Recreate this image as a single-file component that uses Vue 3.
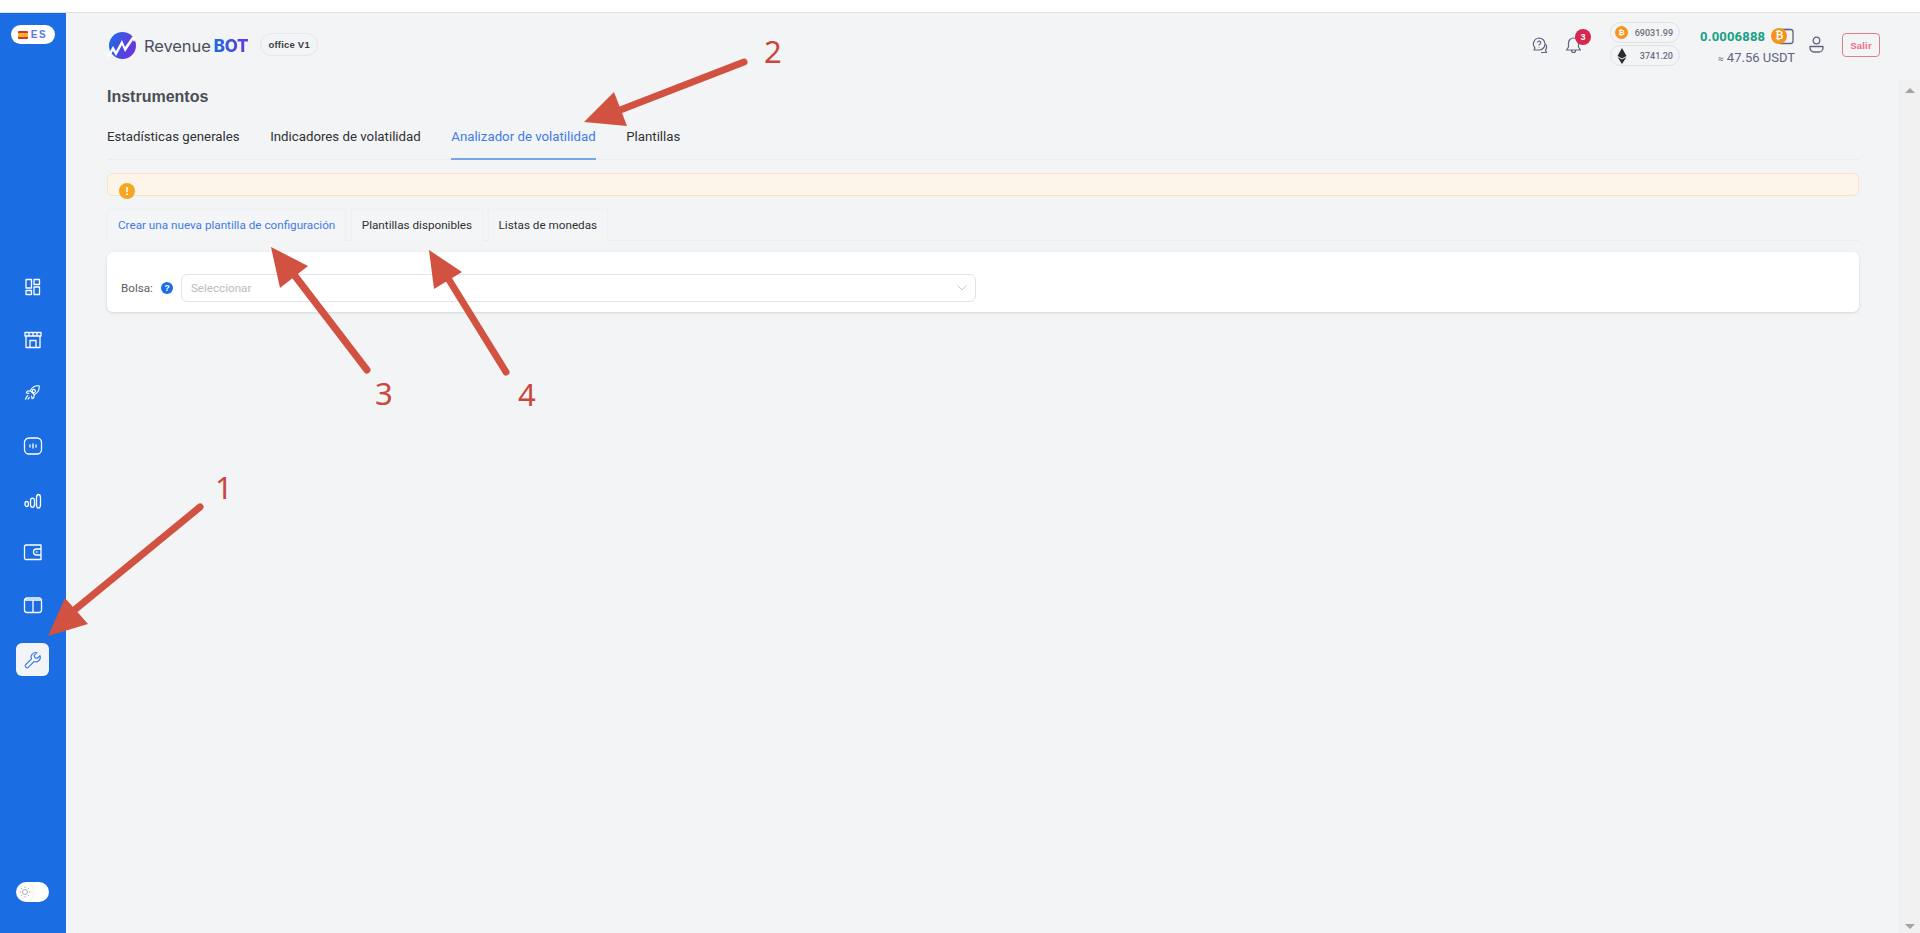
<script setup>
const navIcons = [
  { d: 'M6 5.500h5.500v8.500H6zM14 5.500h5.500v5H14zM6 16.500h5.500v4H6zM14 13h5.500v7.500H14z', s: 26 },
  { d: 'M5 5.500h16v3.500H5zM9 5.500V9M13 5.500V9M17 5.500V9M6 9v11.500h14V9M10 20.500v-7h6v7', s: 26 },
  { d: 'M20.500 5.500c-4.500-.5-8 1.500-10 5.500l4.500 4.500c4-2 6-5.500 5.500-10zM10.500 11l-3.500.5-1 2 3 .5M15 15.500l-.5 3.500-2 1-.5-3M7.500 16.500l-2.500 4M9.500 18.500l-1.500 2M14.500 9.500a1.800 1.800 0 1 0 .01 0', s: 23 },
  { d: 'M9 5h8a4.500 4.500 0 0 1 4.500 4.500v7A4.500 4.500 0 0 1 17 21H9a4.500 4.500 0 0 1-4.500-4.500v-7A4.500 4.500 0 0 1 9 5zM10 12v2M13 11v4M16 12v2', s: 26 },
  { d: 'M5 17.500a1.700 2 0 0 1 3.400 0v1a1.700 2 0 0 1-3.400 0zM10.500 15a2 2.800 0 0 1 4 0v3.500a2 2.800 0 0 1-4 0zM16.500 12a2 3.500 0 0 1 4 0v6.500a2 3.500 0 0 1-4 0z', s: 26 },
  { d: 'M6 6h15v14.500H6a1.500 1.500 0 0 1-1.500-1.500V7.500A1.500 1.500 0 0 1 6 6zM21 10h-4.500a3 3 0 0 0 0 6H21M16.500 13h.5', s: 26 },
  { d: 'M7 6h12a2.500 2.500 0 0 1 2.500 2.500v9.500a2.500 2.500 0 0 1-2.500 2.500H7A2.500 2.500 0 0 1 4.500 18V8.500A2.500 2.500 0 0 1 7 6zM13 8v12.500M5 8h16', s: 26 },
]
const mainTabs = ['Estadísticas generales', 'Indicadores de volatilidad', 'Analizador de volatilidad', 'Plantillas']
const subTabs = ['Crear una nueva plantilla de configuración', 'Plantillas disponibles', 'Listas de monedas']
</script>

<template>
  <div class="app">
    <div class="topband"></div>
    <div class="body">
      <aside class="side">
        <div class="lang">
          <span class="flag"></span><span class="lang-t">ES</span>
        </div>
        <nav class="nav">
          <div v-for="(p, i) in navIcons" :key="i" class="nav-item">
            <svg :width="p.s" :height="p.s" viewBox="0 0 26 26" fill="none" stroke="#fff" stroke-width="1.300" stroke-linejoin="round" stroke-linecap="round"><path :d="p.d" /></svg>
          </div>
          <div class="nav-active">
            <svg width="20" height="20" viewBox="0 0 20 20" fill="none" stroke="#3f80e8" stroke-width="1.200" stroke-linejoin="round" stroke-linecap="round"><path d="M12.500 2.500a4.500 4.500 0 0 0-4 6.300L2.800 14.500a1.900 1.900 0 0 0 2.700 2.700l5.700-5.700a4.500 4.500 0 0 0 5.800-5.800l-2.800 2.600-2.400-.6-.6-2.300 2.700-2.700a4.500 4.500 0 0 0-1.400-.2z" /></svg>
          </div>
        </nav>
        <div class="toggle">
          <span class="knob">
            <svg width="12" height="12" viewBox="0 0 12 12" fill="none" stroke="#a9adb3" stroke-width="1"><circle cx="6" cy="6" r="2.500" /><path d="M6 .5v1.500M6 10v1.500M.5 6H2M10 6h1.500M2.100 2.100l1 1M8.900 8.900l1 1M2.100 9.900l1-1M8.900 3.100l1-1" /></svg>
          </span>
        </div>
      </aside>

      <div class="main">
        <header class="head">
          <div class="logo">
            <svg width="30" height="29" viewBox="0 0 30 29">
              <defs><linearGradient id="lg" x1="0" y1="0" x2="1" y2="0.300"><stop offset="0" stop-color="#1a6de3" /><stop offset="1" stop-color="#6a35e0" /></linearGradient></defs>
              <circle cx="15.500" cy="14.500" r="13.500" fill="url(#lg)" />
              <path d="M0 26l6-11 3 5 6-11 3 7 7-10 5-1-3 6-1-2-8 12-3-7-6 11-3-5-4 6z" fill="#fff" />
            </svg>
            <span class="rev">Revenue</span><span class="bot">BOT</span>
          </div>
          <span class="office">office V1</span>

          <div class="head-right">
            <svg class="ic-help" width="17" height="17" viewBox="0 0 17 17" fill="none" stroke="#5f6480" stroke-width="1.200" stroke-linejoin="round"><path d="M7 1a6 6 0 0 1 0 12H2l1-2A6 6 0 0 1 7 1z" /><path d="M5.500 5.500a1.600 1.600 0 1 1 2.500 1.500c-.7.400-1 .8-1 1.500M7 10v.6" /><path d="M13.500 7a5 5 0 0 1 0 6l1 2.500H9" /></svg>
            <div class="bell">
              <svg width="17" height="18" viewBox="0 0 17 18" fill="none" stroke="#5f6480" stroke-width="1.200" stroke-linejoin="round"><path d="M8.500 2a5 5 0 0 1 5 5v4l2 3H1.500l2-3V7a5 5 0 0 1 5-5zM6.500 14.500a2 2 0 0 0 4 0" /></svg>
              <span class="badge">3</span>
            </div>
            <div class="coins">
              <div class="coin">
                <span class="btc-s">₿</span><span class="coin-v">69031.99</span>
              </div>
              <div class="coin">
                <svg width="14" height="16" viewBox="0 0 14 16"><path d="M7 0l4.500 8L7 10.500 2.500 8z" fill="#2b2b33" /><path d="M7 11.500l4.500-2.500L7 16 2.500 9z" fill="#2b2b33" /></svg>
                <span class="coin-v">3741.20</span>
              </div>
            </div>
            <div class="balance">
              <div class="bal-top">
                <span class="bal-g">0.0006888</span>
                <span class="wallet">
                  <svg width="17" height="17" viewBox="0 0 17 17" fill="none" stroke="#5f6480" stroke-width="1.300"><rect x="1" y="1.500" width="15" height="14" rx="2.500" /><path d="M8 1.500h5" /></svg>
                  <span class="btc-m">₿</span>
                </span>
              </div>
              <div class="bal-usd"><span class="approx">≈</span> 47.56 USDT</div>
            </div>
            <svg class="ic-user" width="15" height="17" viewBox="0 0 15 17" fill="none" stroke="#5f6480" stroke-width="1.300"><circle cx="7.500" cy="4.500" r="3.300" /><path d="M1 10.500h13v1.500a4 4 0 0 1-4 4H5a4 4 0 0 1-4-4z" stroke-linejoin="round" /></svg>
            <button class="salir">Salir</button>
          </div>
        </header>

        <div class="row">
          <div class="page">
            <h1 class="title">Instrumentos</h1>
            <div class="tabs">
              <span v-for="(t, i) in mainTabs" :key="t" class="tab" :class="{ on: i === 2 }">{{ t }}</span>
            </div>
            <div class="alert"><span class="alert-i">!</span></div>
            <div class="subtabs">
              <span v-for="(t, i) in subTabs" :key="t" class="subtab" :class="{ on: i === 0 }">{{ t }}</span>
            </div>
            <div class="card">
              <span class="lbl">Bolsa:</span>
              <span class="q">?</span>
              <div class="select">
                <span>Seleccionar</span>
                <svg width="10" height="6" viewBox="0 0 10 6" fill="none" stroke="#c4c7cd" stroke-width="1"><path d="M.5.500 5 5 9.500.5" /></svg>
              </div>
            </div>
          </div>
          <div class="rail">
            <span class="arr up"></span>
            <span class="arr down"></span>
          </div>
        </div>
      </div>
    </div>

    <svg class="notes" width="1920" height="933" viewBox="0 0 1920 933">
      <g stroke="#d15241" stroke-width="7" stroke-linecap="round" fill="none">
        <path d="M200 507L72 612" />
        <path d="M744 62L615 112" />
        <path d="M367 370L292 272" />
        <path d="M506 372L446 275" />
      </g>
      <g fill="#d15241">
        <path d="M48 636L65 598 88 624z" />
        <path d="M584 122L614 92 627 126z" />
        <path d="M271 247L308 266 280 288z" />
        <path d="M429 250L462 272 434 289z" />
      </g>
      <g class="nums" fill="#c9473c">
        <text x="215" y="499">1</text>
        <text x="764" y="63">2</text>
        <text x="375" y="405">3</text>
        <text x="518" y="406">4</text>
      </g>
    </svg>
  </div>
</template>

<style>
html, body { margin: 0; overflow: hidden; background: #fff; }
</style>

<style scoped>
* { box-sizing: border-box; }
.app {
  position: relative;
  width: 1920px;
  height: 933px;
  display: flex;
  flex-direction: column;
  font-family: Roboto, "Liberation Sans", sans-serif;
  color: #303133;
}
.topband { height: 13px; background: #fff; border-bottom: 1px solid #dfe1e4; }
.body { flex: 1; display: flex; min-height: 0; }
.side {
  width: 66px;
  background: #1a6de3;
  display: flex;
  flex-direction: column;
  align-items: center;
  padding: 12px 1px 31px 0;
}
.lang {
  width: 44px;
  height: 19px;
  background: #fff;
  border-radius: 10px;
  display: flex;
  align-items: center;
  justify-content: center;
  gap: 3px;
}
.flag {
  width: 10px;
  height: 8px;
  border-radius: 1px;
  background: linear-gradient(#d8352a 0 25%, #f4b32c 25% 75%, #d8352a 75%);
}
.lang-t { font: 700 10px "Liberation Sans", sans-serif; letter-spacing: 1.500px; color: #5a78e0; }
.nav {
  margin-top: 216px;
  display: flex;
  flex-direction: column;
  align-items: center;
}
.nav-item { width: 33px; height: 53px; display: flex; align-items: center; justify-content: center; }
.nav-active {
  margin-top: 12px;
  width: 33px;
  height: 33px;
  border-radius: 6px;
  background: #f3f4f6;
  display: flex;
  align-items: center;
  justify-content: center;
}
.toggle {
  margin-top: auto;
  width: 33px;
  height: 20px;
  border-radius: 10px;
  background: #fff;
  display: flex;
  align-items: center;
}
.knob {
  width: 16px;
  height: 20px;
  display: flex;
  align-items: center;
  justify-content: center;
  margin-left: 1px;
  border-radius: 50%;
  box-shadow: 1px 0 2px rgba(0, 0, 0, .08);
}
.main { flex: 1; background: #f3f4f6; display: flex; flex-direction: column; min-width: 0; }
.head {
  height: 67px;
  padding: 0 40px 0 41px;
  display: flex;
  align-items: flex-start;
}
.logo { display: flex; align-items: center; height: 29px; margin-top: 18px; }
.logo svg { margin-right: 7px; }
.rev { font: 400 16.500px Inter, sans-serif; color: #4b4f5c; letter-spacing: -.1px; }
.bot {
  margin-left: 3px;
  font: 800 17px Inter, sans-serif;
  letter-spacing: -.3px;
  background: linear-gradient(90deg, #1a6de3, #6a35e0);
  -webkit-background-clip: text;
  background-clip: text;
  color: transparent;
}
.office {
  margin-left: 12px;
  margin-top: 20px;
  width: 58px;
  height: 23px;
  border: 1px solid #e4e6ea;
  border-radius: 12px;
  display: flex;
  align-items: center;
  justify-content: center;
  font: 700 9.500px "Liberation Sans", sans-serif;
  letter-spacing: .2px;
  color: #3a3d46;
}
.head-right { margin-left: auto; display: flex; align-items: flex-start; position: relative; }
.ic-help { margin-top: 24px; }
.bell { position: relative; margin-left: 16px; margin-top: 23px; width: 17px; height: 18px; }
.badge {
  position: absolute;
  left: 10px;
  top: -7px;
  width: 16px;
  height: 16px;
  border-radius: 50%;
  background: #d6274f;
  color: #fff;
  font: 700 9px/16px "Liberation Sans", sans-serif;
  text-align: center;
}
.coins { margin-left: 28px; margin-top: 9px; display: flex; flex-direction: column; gap: 2px; }
.coin {
  width: 70px;
  height: 21px;
  border: 1.500px solid #e0e2e6;
  border-radius: 11px;
  display: flex;
  align-items: center;
  justify-content: space-between;
  padding: 0 6px 0 4px;
}
.btc-s {
  width: 13px;
  height: 13px;
  border-radius: 50%;
  background: #f7931a;
  color: #fff;
  font: 700 8px/13px "Liberation Sans", sans-serif;
  text-align: center;
}
.coin-v { font: 500 9px Roboto, sans-serif; color: #6b6f80; }
.balance { margin-left: 20px; margin-top: 15px; width: 95px; display: flex; flex-direction: column; }
.bal-top { display: flex; align-items: center; height: 17px; }
.bal-g { font: 700 13px Roboto, sans-serif; color: #16a085; letter-spacing: .2px; }
.wallet { position: relative; margin-left: 6px; width: 24px; height: 17px; }
.wallet svg { position: absolute; left: 6px; top: 0; }
.btc-m {
  position: absolute;
  left: 0;
  top: 0;
  width: 16px;
  height: 16px;
  border-radius: 50%;
  background: #f7931a;
  color: #fff;
  font: 700 10px/16px "Liberation Sans", sans-serif;
  text-align: center;
}
.bal-usd { margin-top: 5px; text-align: right; font: 400 13px/16px Roboto, sans-serif; color: #5f6480; white-space: nowrap; }
.approx { font-size: 10px; }
.ic-user { margin-top: 23px; margin-left: 14px; }
.salir {
  margin-left: 18px;
  margin-top: 20px;
  width: 38px;
  height: 24px;
  border: 1px solid #df7c90;
  border-radius: 4px;
  background: transparent;
  padding: 0;
  color: #f36b80;
  font: 700 9.500px "Liberation Sans", sans-serif;
  letter-spacing: .2px;
}
.row { flex: 1; display: flex; min-height: 0; }
.page { flex: 1; padding: 0 40px 0 41px; min-width: 0; }
.title { margin: 1px 0 0; font: 700 16px/32px "Liberation Sans", sans-serif; color: #4b4d55; }
.tabs { margin-top: 9px; height: 38px; border-bottom: 1px solid #ebedf0; display: flex; gap: 30.500px; }
.tab { height: 38px; padding-top: 6px; font: 400 13.250px/18px Roboto, sans-serif; color: #303133; white-space: nowrap; }
.tab.on { color: #3f7be8; border-bottom: 2px solid #76a5ec; }
.alert {
  position: relative;
  margin-top: 13px;
  height: 23px;
  background: #fdf5ea;
  border: 1.500px solid #fae3bf;
  border-radius: 6px;
}
.alert-i {
  position: absolute;
  left: 11px;
  top: 9px;
  width: 16px;
  height: 16px;
  border-radius: 50%;
  background: #f5a623;
  color: #fff;
  font: 700 11px/16px "Liberation Sans", sans-serif;
  text-align: center;
}
.subtabs { margin-top: 13px; height: 32px; border-bottom: 1px solid #ebedf0; display: flex; gap: 4.500px; }
.subtab {
  height: 32px;
  padding: 0 10px;
  background: #f4f5f7;
  border: 1px solid #eff0f2;
  border-bottom: 0;
  font: 400 11.700px/31px Roboto, sans-serif;
  color: #303133;
  white-space: nowrap;
}
.subtab.on { color: #3f7be8; }
.card {
  margin-top: 11px;
  height: 60px;
  background: #fff;
  border-radius: 6px;
  box-shadow: 0 1px 3px rgba(0, 0, 0, .12);
  padding: 22px 0 0 14px;
  display: flex;
  align-items: flex-start;
}
.lbl { font: 400 11.650px/28px Roboto, sans-serif; color: #5c5f66; }
.q {
  margin: 8px 0 0 8px;
  width: 12px;
  height: 12px;
  border-radius: 50%;
  background: #1a6de3;
  color: #fff;
  font: 700 9px/12px "Liberation Sans", sans-serif;
  text-align: center;
}
.select {
  margin-left: 8px;
  width: 795px;
  height: 28px;
  border: 1px solid #e2e4e8;
  border-radius: 6px;
  background: #fff;
  display: flex;
  align-items: center;
  justify-content: space-between;
  padding: 0 8px 0 9px;
  font: 400 11.650px Roboto, sans-serif;
  color: #b9bcc2;
}
.rail {
  width: 21px;
  background: #f1f1f1;
  display: flex;
  flex-direction: column;
  justify-content: space-between;
  align-items: center;
  padding: 8px 0 4px;
}
.arr { width: 0; height: 0; border-left: 5px solid transparent; border-right: 5px solid transparent; }
.arr.up { border-bottom: 5px solid #a3a3a3; }
.arr.down { border-top: 5px solid #a3a3a3; }
.notes { position: absolute; left: 0; top: 0; pointer-events: none; }
.nums { font: 400 31px "Noto Sans", sans-serif; }
</style>
